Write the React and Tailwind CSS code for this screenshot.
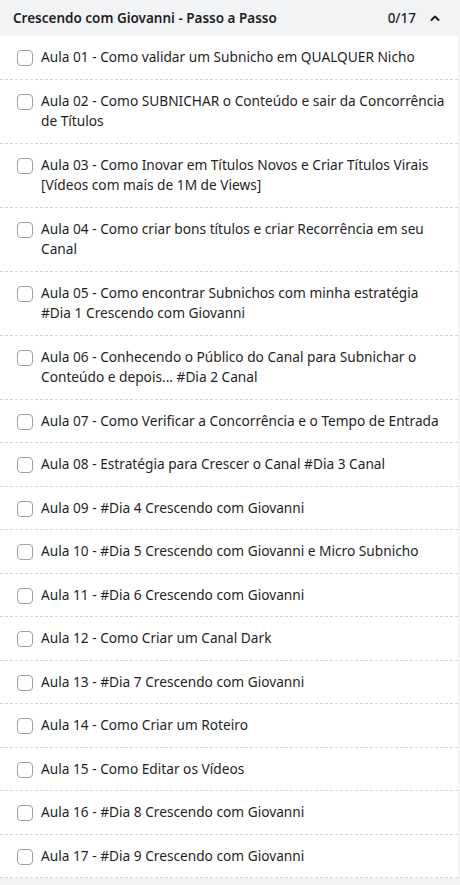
const AULAS = [
  'Aula 01 - Como validar um Subnicho em QUALQUER Nicho',
  'Aula 02 - Como SUBNICHAR o Conteúdo e sair da Concorrência de Títulos',
  'Aula 03 - Como Inovar em Títulos Novos e Criar Títulos Virais [Vídeos com mais de 1M de Views]',
  'Aula 04 - Como criar bons títulos e criar Recorrência em seu Canal',
  'Aula 05 - Como encontrar Subnichos com minha estratégia #Dia 1 Crescendo com Giovanni',
  'Aula 06 - Conhecendo o Público do Canal para Subnichar o Conteúdo e depois... #Dia 2 Canal',
  'Aula 07 - Como Verificar a Concorrência e o Tempo de Entrada',
  'Aula 08 - Estratégia para Crescer o Canal #Dia 3 Canal',
  'Aula 09 - #Dia 4 Crescendo com Giovanni',
  'Aula 10 - #Dia 5 Crescendo com Giovanni e Micro Subnicho',
  'Aula 11 - #Dia 6 Crescendo com Giovanni',
  'Aula 12 - Como Criar um Canal Dark',
  'Aula 13 - #Dia 7 Crescendo com Giovanni',
  'Aula 14 - Como Criar um Roteiro',
  'Aula 15 - Como Editar os Vídeos',
  'Aula 16 - #Dia 8 Crescendo com Giovanni',
  'Aula 17 - #Dia 9 Crescendo com Giovanni',
]

function ChevronUp() {
  return (
    <svg width="12" height="12" viewBox="0 0 24 24" fill="none" stroke="currentColor" strokeWidth="4" strokeLinecap="round" strokeLinejoin="round">
      <path d="M5 16l7-7 7 7" />
    </svg>
  )
}

export default function App() {
  return (
    <div className="min-h-[885px] bg-[#f2f3f5] font-['Noto_Sans',sans-serif] text-[#1f1f1f]">
      <div className="w-[458px] bg-white">
        {/* Header */}
        <div className="h-[36px] flex items-center justify-between pl-[13px] pr-[17px] bg-[#f2f3f5]">
          <span className="text-[13.5px] font-semibold">Crescendo com Giovanni - Passo a Passo</span>
          <div className="flex items-center gap-[13px]">
            <span className="text-[13.5px] font-medium">0/17</span>
            <ChevronUp />
          </div>
        </div>

        {/* Lessons */}
        <ul>
          {AULAS.map((a, i) => (
            <li key={i} className="flex items-start gap-[8px] pl-[17px] pr-[8px] py-[11px] border-b border-dashed border-[#d4d6da] leading-[20.5px]">
              <span className="mt-[3px] w-[16px] h-[16px] shrink-0 rounded-[4px] border border-[#9aa0a8] bg-white" />
              <span className="text-[13.7px] leading-[20.5px]">{a}</span>
            </li>
          ))}
        </ul>
      </div>
    </div>
  )
}
